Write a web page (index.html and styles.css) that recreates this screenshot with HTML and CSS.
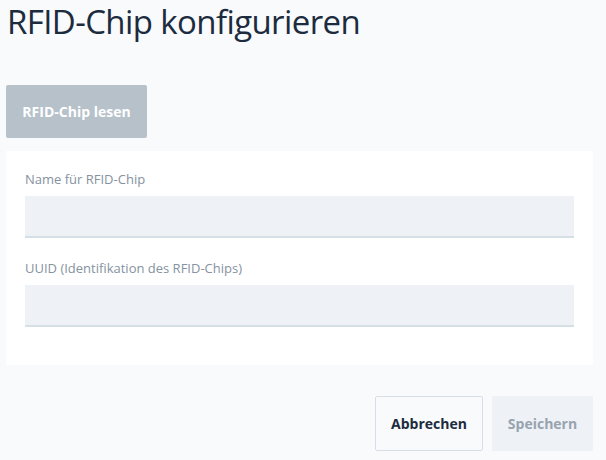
FILE: index.html
```html
<!DOCTYPE html>
<html lang="de">
<head>
<meta charset="utf-8">
<link rel="stylesheet" href="styles.css">
</head>
<body>
<div class="page">
  <h1 class="title">RFID-Chip konfigurieren</h1>
  <button class="btn btn-read" type="button">RFID-Chip lesen</button>
  <div class="card">
    <div class="field">
      <label class="label">Name für RFID-Chip</label>
      <div class="input"></div>
    </div>
    <div class="field">
      <label class="label">UUID (Identifikation des RFID-Chips)</label>
      <div class="input"></div>
    </div>
  </div>
  <div class="actions">
    <button class="btn btn-cancel" type="button">Abbrechen</button>
    <button class="btn btn-save" type="button">Speichern</button>
  </div>
</div>
</body>
</html>
```
FILE: styles.css
```css
html, body {
  margin: 0;
  padding: 0;
  background: #f8fafc;
  font-family: "Open Sans", "Noto Sans", sans-serif;
}
.page {
  width: 587px;
  padding: 0 13px 0 6px;
}
.title {
  margin: 0 0 0 1px;
  font-size: 33px;
  font-weight: 400;
  line-height: 44px;
  color: #1c2b3e;
  letter-spacing: -0.6px;
}
.btn {
  font-family: inherit;
  font-weight: 700;
  font-size: 14px;
  border: 0;
  border-radius: 2px;
  cursor: pointer;
}
.btn-read {
  display: block;
  margin-top: 41px;
  width: 141px;
  height: 53px;
  background: #b6c1ca;
  color: #ffffff;
}
.card {
  margin-top: 13px;
  background: #ffffff;
  padding: 18px 19px 38px 19px;
}
.field + .field {
  margin-top: 20px;
}
.label {
  display: block;
  font-size: 13px;
  line-height: 20px;
  color: #8592a0;
  margin-bottom: 7px;
}
.input {
  height: 40px;
  background: #eef2f6;
  border-bottom: 2px solid #d6dee6;
}
.actions {
  display: flex;
  justify-content: flex-end;
  gap: 9px;
  margin-top: 31px;
}
.btn-cancel {
  width: 108px;
  height: 55px;
  background: #f8fafc;
  border: 1px solid #d6dfe7;
  color: #1c2b3e;
}
.btn-save {
  width: 101px;
  height: 55px;
  background: #eef2f6;
  color: #97a3af;
  border-radius: 0;
}
```
